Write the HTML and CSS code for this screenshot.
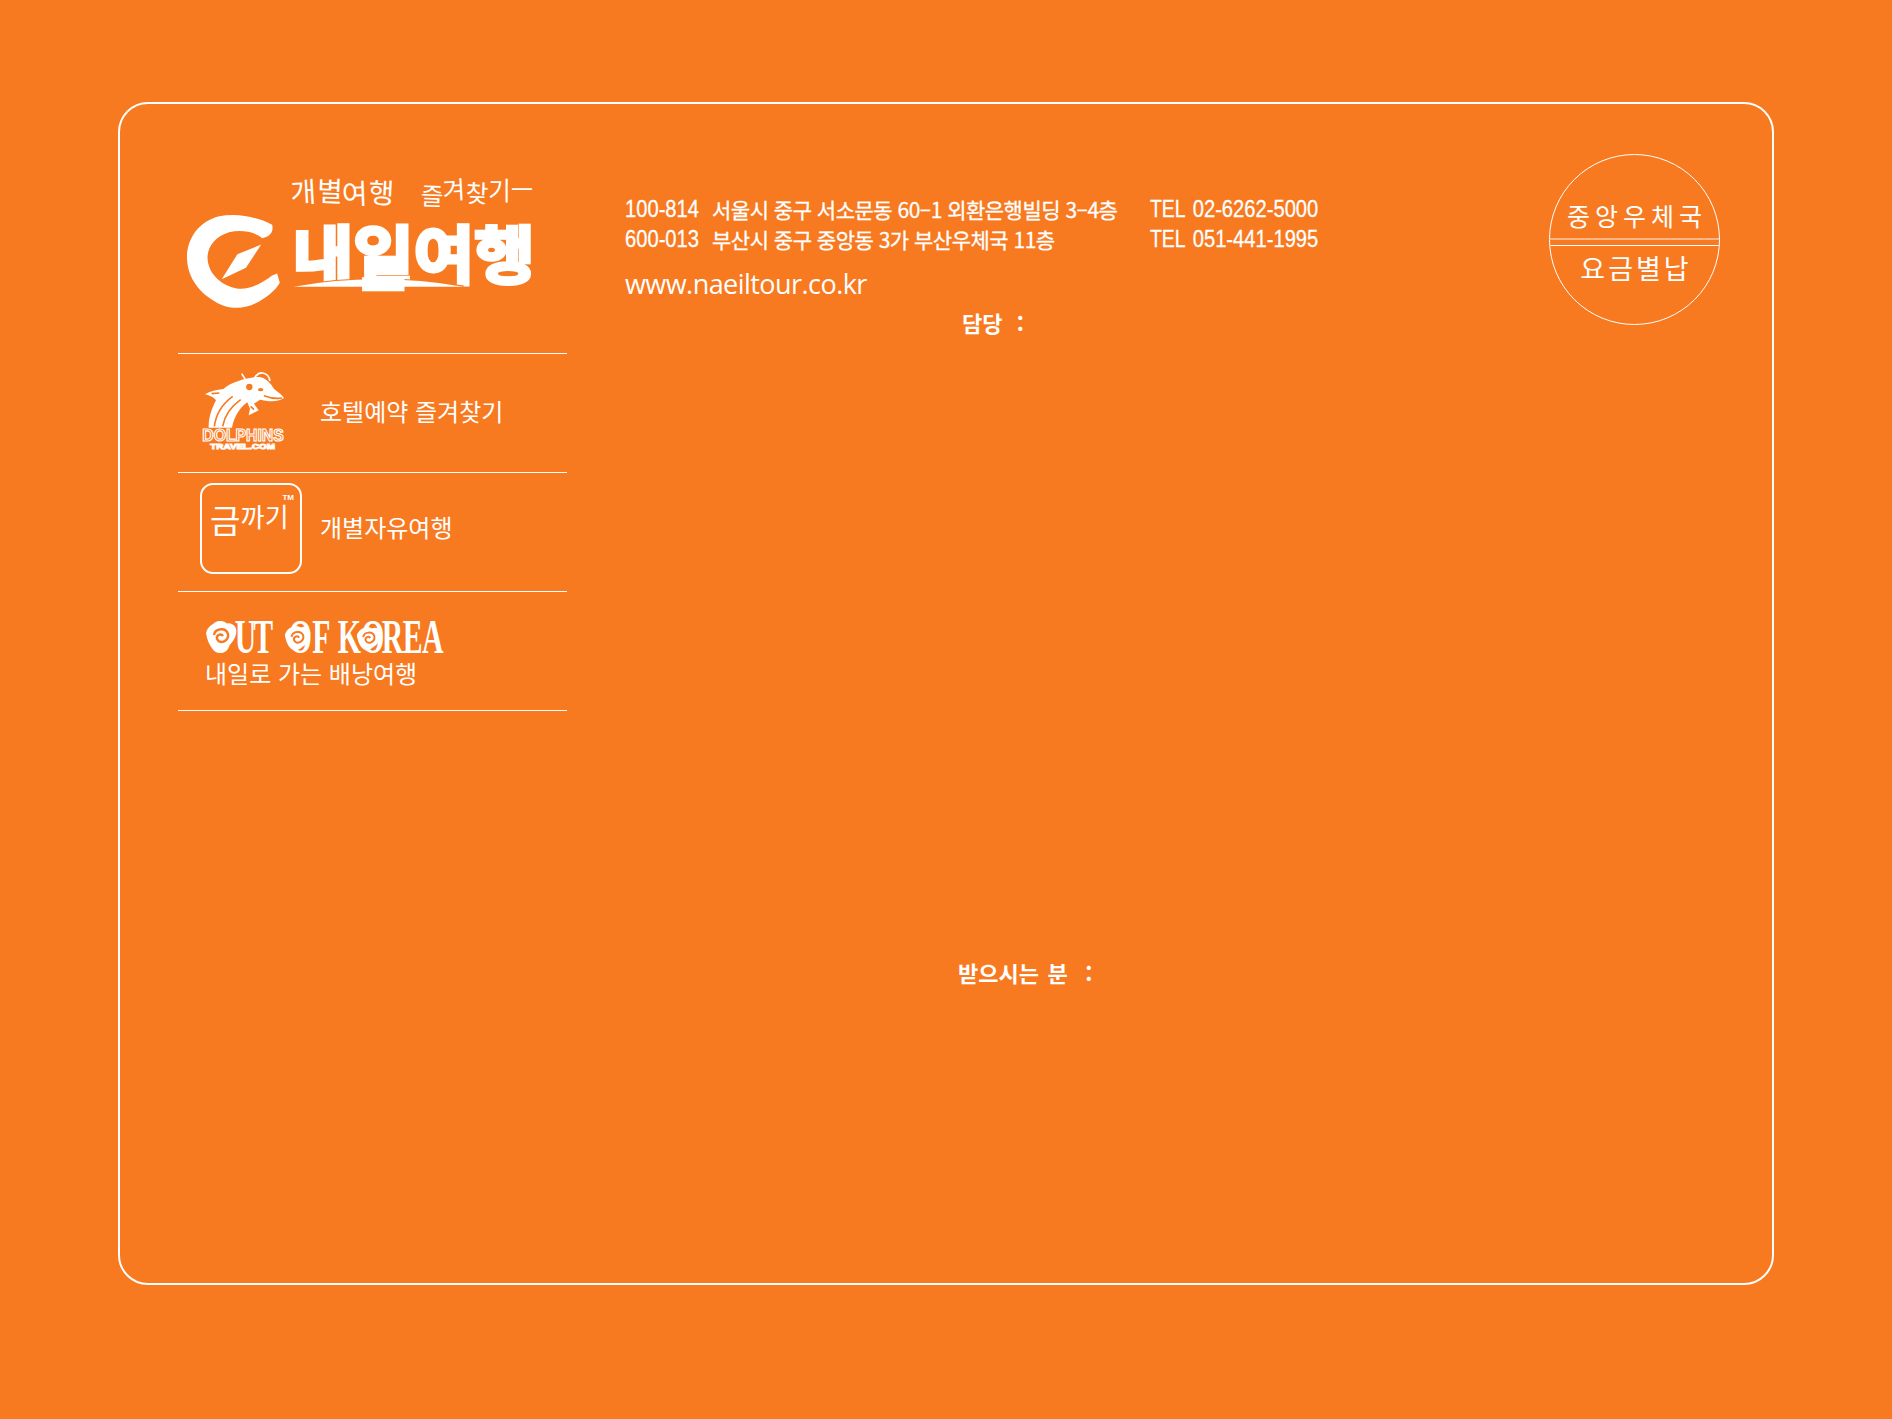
FILE: index.html
```html
<!DOCTYPE html>
<html lang="ko">
<head>
    <meta charset="UTF-8">
    <title>내일여행 봉투</title>
    <link rel="stylesheet" href="styles.css">
</head>
<body>
    <div class="envelope">
        <aside class="sidebar">
            <svg class="logo" viewBox="54 12 1167 600" aria-label="내일여행">
                <text class="logo-tag" x="392" y="160" dy="0 -6 10 -6" rotate="-3 2 -2 3">개별여행</text>
                <text class="logo-tag logo-tag-b" x="782" y="165" dy="0 -16 8 -6 -4" rotate="2 -3 2 0 0">즐겨찾기ㅡ</text>
                <path class="logo-fill" d="M335 225 C340 245 330 262 305 266 C280 245 240 240 205 248 C165 260 140 290 140 325 C142 370 175 405 225 417 C265 425 305 400 335 378 L350 372 L358 400 C345 425 310 450 285 462 C250 480 200 482 160 455 C110 425 78 380 78 320 C80 265 115 215 175 200 C235 188 295 205 335 225 Z"/>
                <path class="logo-fill" d="M302 285 L230 314 L183 390 L256 355 Z"/>
                <text class="logo-name" x="397" y="386" textLength="730" lengthAdjust="spacingAndGlyphs">내일여행</text>
                <path class="logo-arc" d="M400 412 Q650 368 912 412 Z"/>
                <rect class="logo-fill" x="606" y="383" width="128" height="11"/>
                <rect class="logo-fill" x="606" y="400" width="128" height="26"/>
            </svg>

            <div class="promo">
                <svg class="dolphin" viewBox="120 62 258 240" aria-label="Dolphins Travel">
                    <path class="dolphin-body" d="M372 143 C360 125 345 125 335 105 C320 85 305 78 290 80 C255 84 215 95 190 116 C170 118 150 122 135 132 C150 135 160 140 168 150 C155 175 145 205 146 232 L216 232 C222 200 240 170 262 156 L270 175 L266 195 L296 180 L282 160 L300 148 C320 152 350 158 372 143 Z"/>
                    <path class="dolphin-cut" d="M163 228 C168 190 188 160 218 138 M188 228 C194 195 214 168 242 148 M312 136 C330 143 350 146 366 143 M272 168 L282 178 M155 130 L178 128"/>
                    <ellipse class="dolphin-eye" cx="302" cy="118" rx="8" ry="5"/>
                    <circle class="dolphin-phone" cx="268" cy="110" r="12"/>
                    <path class="dolphin-wire" d="M245 70 L264 100 M278 100 C280 82 292 66 308 68 C320 70 328 80 330 92"/>
                    <text class="dolphin-name" x="127" y="272" textLength="244" lengthAdjust="spacingAndGlyphs">DOLPHINS</text>
                    <text class="dolphin-sub" x="151" y="296" textLength="194" lengthAdjust="spacingAndGlyphs">TRAVEL.COM</text>
                </svg>
                <span class="promo-text">호텔예약 즐겨찾기</span>
            </div>

            <div class="promo promo-geum">
                <div class="geum">
                    <span class="geum-big">금</span><span class="geum-small">까기</span>
                    <span class="geum-tm">TM</span>
                </div>
                <span class="promo-text">개별자유여행</span>
            </div>

            <div class="promo promo-out">
                <svg class="out-title" viewBox="0 0 242 38" aria-label="Out of Korea">
                    <g transform="scale(.62 1)">
                        <text class="out-text" x="6 48 78 113 135 173 194 214 252 285 319 350" y="35">OUT OF KOREA</text>
                    </g>
                    <g transform="translate(0 3)">
                        <path class="out-heart" d="M1 12 C3 3 14 -1 20 3 C27 0 33 6 31 13 C29 22 22 27 14 31 C8 30 3 24 1 12 Z"/>
                        <path class="out-swirl" d="M9 14 C10 7 21 6 23 13 C24 20 15 24 12 18 C11 14 16 12 18 15"/>
                    </g>
                    <g transform="translate(79 7) scale(.84)">
                        <path class="out-heart" d="M1 12 C3 3 14 -1 20 3 C27 0 33 6 31 13 C29 22 22 27 14 31 C8 30 3 24 1 12 Z"/>
                        <path class="out-swirl" d="M9 14 C10 7 21 6 23 13 C24 20 15 24 12 18 C11 14 16 12 18 15"/>
                    </g>
                    <g transform="translate(151 8) scale(.8)">
                        <path class="out-heart" d="M1 12 C3 3 14 -1 20 3 C27 0 33 6 31 13 C29 22 22 27 14 31 C8 30 3 24 1 12 Z"/>
                        <path class="out-swirl" d="M9 14 C10 7 21 6 23 13 C24 20 15 24 12 18 C11 14 16 12 18 15"/>
                    </g>
                </svg>
                <span class="promo-text">내일로 가는 배낭여행</span>
            </div>
        </aside>

        <main class="content">
            <div class="top-row">
                <div class="sender">
                    <div class="addr-line">
                        <span class="zip"><span class="narrow">100-814</span></span>
                        <span class="addr">서울시 중구 서소문동 60–1 외환은행빌딩 3–4층</span>
                        <span class="narrow"><span class="tel-label">TEL</span> 02-6262-5000</span>
                    </div>
                    <div class="addr-line">
                        <span class="zip"><span class="narrow">600-013</span></span>
                        <span class="addr">부산시 중구 중앙동 3가 부산우체국 11층</span>
                        <span class="narrow"><span class="tel-label">TEL</span> 051-441-1995</span>
                    </div>
                    <div class="site">www.naeiltour.co.kr</div>
                    <div class="contact">담당 &nbsp;:</div>
                </div>
                <div class="stamp">
                    <div class="stamp-top">중앙우체국</div>
                    <div class="stamp-band"></div>
                    <div class="stamp-bottom">요금별납</div>
                </div>
            </div>
            <div class="receiver">받으시는 분 &nbsp;:</div>
        </main>
    </div>
</body>
</html>
```

FILE: styles.css
```css
:root {
    --orange: #f77a21;
    --white: #ffffff;
}

* {
    box-sizing: border-box;
    margin: 0;
    padding: 0;
}

body {
    background-color: var(--orange);
    color: var(--white);
    font-family: "Noto Sans CJK KR", "Liberation Sans", sans-serif;
    width: 1892px;
    height: 1419px;
    padding: 102px 118px 134px;
    overflow: hidden;
}

svg {
    overflow: visible;
}

/* outer frame */
.envelope {
    display: flex;
    gap: 58px;
    height: 100%;
    border: 2px solid var(--white);
    border-radius: 30px;
    padding: 50px 52px 0 58px;
}

.sidebar {
    width: 389px;
    flex-shrink: 0;
}

.logo {
    display: block;
    width: 389px;
    height: 200px;
    border-bottom: 1px solid var(--white);
}

.logo-tag {
    fill: var(--white);
    font-size: 84px;
}

.logo-tag-b {
    font-size: 74px;
}

.logo-fill {
    fill: var(--white);
}

.logo-name {
    fill: var(--white);
    stroke: var(--white);
    stroke-width: 11px;
    font-size: 190px;
    font-weight: 700;
}

/* arc sits on the wordmark, orange edge keeps them apart */
.logo-arc {
    fill: var(--white);
    stroke: var(--orange);
    stroke-width: 7px;
    paint-order: stroke;
}

.promo {
    display: flex;
    align-items: center;
    gap: 33px;
    height: 119px;
    padding: 0 0 5px 22px;
    border-bottom: 1px solid var(--white);
}

.promo-text {
    font-size: 24px;
    line-height: 1;
    white-space: nowrap;
}

.dolphin {
    width: 86px;
    height: 80px;
    margin-right: 1px;
    flex-shrink: 0;
}

.dolphin-body {
    fill: var(--white);
}

.dolphin-cut {
    fill: none;
    stroke: var(--orange);
    stroke-width: 5px;
}

.dolphin-eye {
    fill: var(--orange);
}

.dolphin-phone {
    fill: var(--orange);
    stroke: var(--white);
    stroke-width: 5px;
}

.dolphin-wire {
    fill: none;
    stroke: var(--white);
    stroke-width: 5px;
}

.dolphin-name {
    fill: var(--orange);
    stroke: var(--white);
    stroke-width: 3.5px;
    font-family: "Liberation Sans", sans-serif;
    font-size: 50px;
    font-weight: 700;
}

.dolphin-sub {
    fill: var(--orange);
    stroke: var(--white);
    stroke-width: 3px;
    font-family: "Liberation Sans", sans-serif;
    font-size: 24px;
    font-weight: 700;
}

.promo-geum {
    gap: 18px;
    padding-bottom: 7px;
}

.promo-geum .promo-text {
    margin-bottom: 3px;
}

.geum {
    position: relative;
    display: flex;
    align-items: flex-start;
    flex-shrink: 0;
    width: 102px;
    height: 91px;
    padding: 18px 0 0 8px;
    border: 2px solid var(--white);
    border-radius: 13px;
    line-height: 1;
}

.geum-big {
    font-size: 33px;
}

.geum-small {
    font-size: 26px;
    letter-spacing: 0.5px;
}

/* little trademark in the corner */
.geum-tm {
    position: absolute;
    top: 9px;
    right: 6px;
    font-family: "Liberation Sans", sans-serif;
    font-size: 8px;
    font-weight: 700;
}

.promo-out {
    flex-direction: column;
    align-items: flex-start;
    justify-content: flex-start;
    gap: 5px;
    padding: 26px 0 0 27px;
}

.out-title {
    display: block;
    width: 242px;
    height: 38px;
}

.out-text {
    fill: var(--white);
    font-family: "Liberation Serif", serif;
    font-size: 48px;
    font-weight: 700;
}

.out-heart {
    fill: var(--white);
}

.out-swirl {
    fill: none;
    stroke: var(--orange);
    stroke-width: 2.4px;
}

.content {
    flex: 1;
    display: flex;
    flex-direction: column;
}

.top-row {
    display: flex;
    justify-content: space-between;
    align-items: flex-start;
}

.sender {
    padding-top: 40px;
}

.addr-line {
    display: flex;
    align-items: center;
    height: 30px;
    white-space: nowrap;
}

.zip {
    width: 87px;
}

/* the numbers are set condensed, and there is no narrow face to name */
.narrow {
    display: inline-block;
    font-family: "Liberation Sans", sans-serif;
    font-size: 24px;
    -webkit-text-stroke: 0.3px var(--white);
    transform: scaleX(0.84);
    transform-origin: left center;
}

.addr {
    width: 438px;
    font-size: 21px;
    letter-spacing: -0.5px;
    -webkit-text-stroke: 0.3px var(--white);
}

.tel-label {
    font-size: 23px;
    margin-right: 2px;
}

.site {
    margin-top: 13px;
    font-family: "Open Sans", sans-serif;
    font-size: 27px;
    letter-spacing: -0.55px;
    line-height: 34px;
}

.contact {
    margin: 5px 0 0 337px;
    font-size: 22px;
    font-weight: 700;
    word-spacing: 1px;
    line-height: 32px;
    white-space: nowrap;
}

/* postage circle */
.stamp {
    display: flex;
    flex-direction: column;
    width: 171px;
    height: 171px;
    border: 1px solid var(--white);
    border-radius: 50%;
    overflow: hidden;
    flex-shrink: 0;
    text-align: center;
}

.stamp-top {
    height: 83px;
    padding: 42px 0 0 5px;
    font-size: 25px;
    letter-spacing: 5px;
    line-height: 36px;
}

.stamp-band {
    height: 8px;
    border-top: 2px solid rgba(255, 255, 255, 0.45);
    border-bottom: 1px solid var(--white);
}

.stamp-bottom {
    padding: 3px 0 0 3px;
    font-size: 27px;
    letter-spacing: 3px;
    line-height: 38px;
}

.receiver {
    margin-left: 333px;
    padding-top: 618px;
    font-size: 22px;
    font-weight: 700;
    word-spacing: 2.5px;
    line-height: 32px;
    white-space: nowrap;
}
```
